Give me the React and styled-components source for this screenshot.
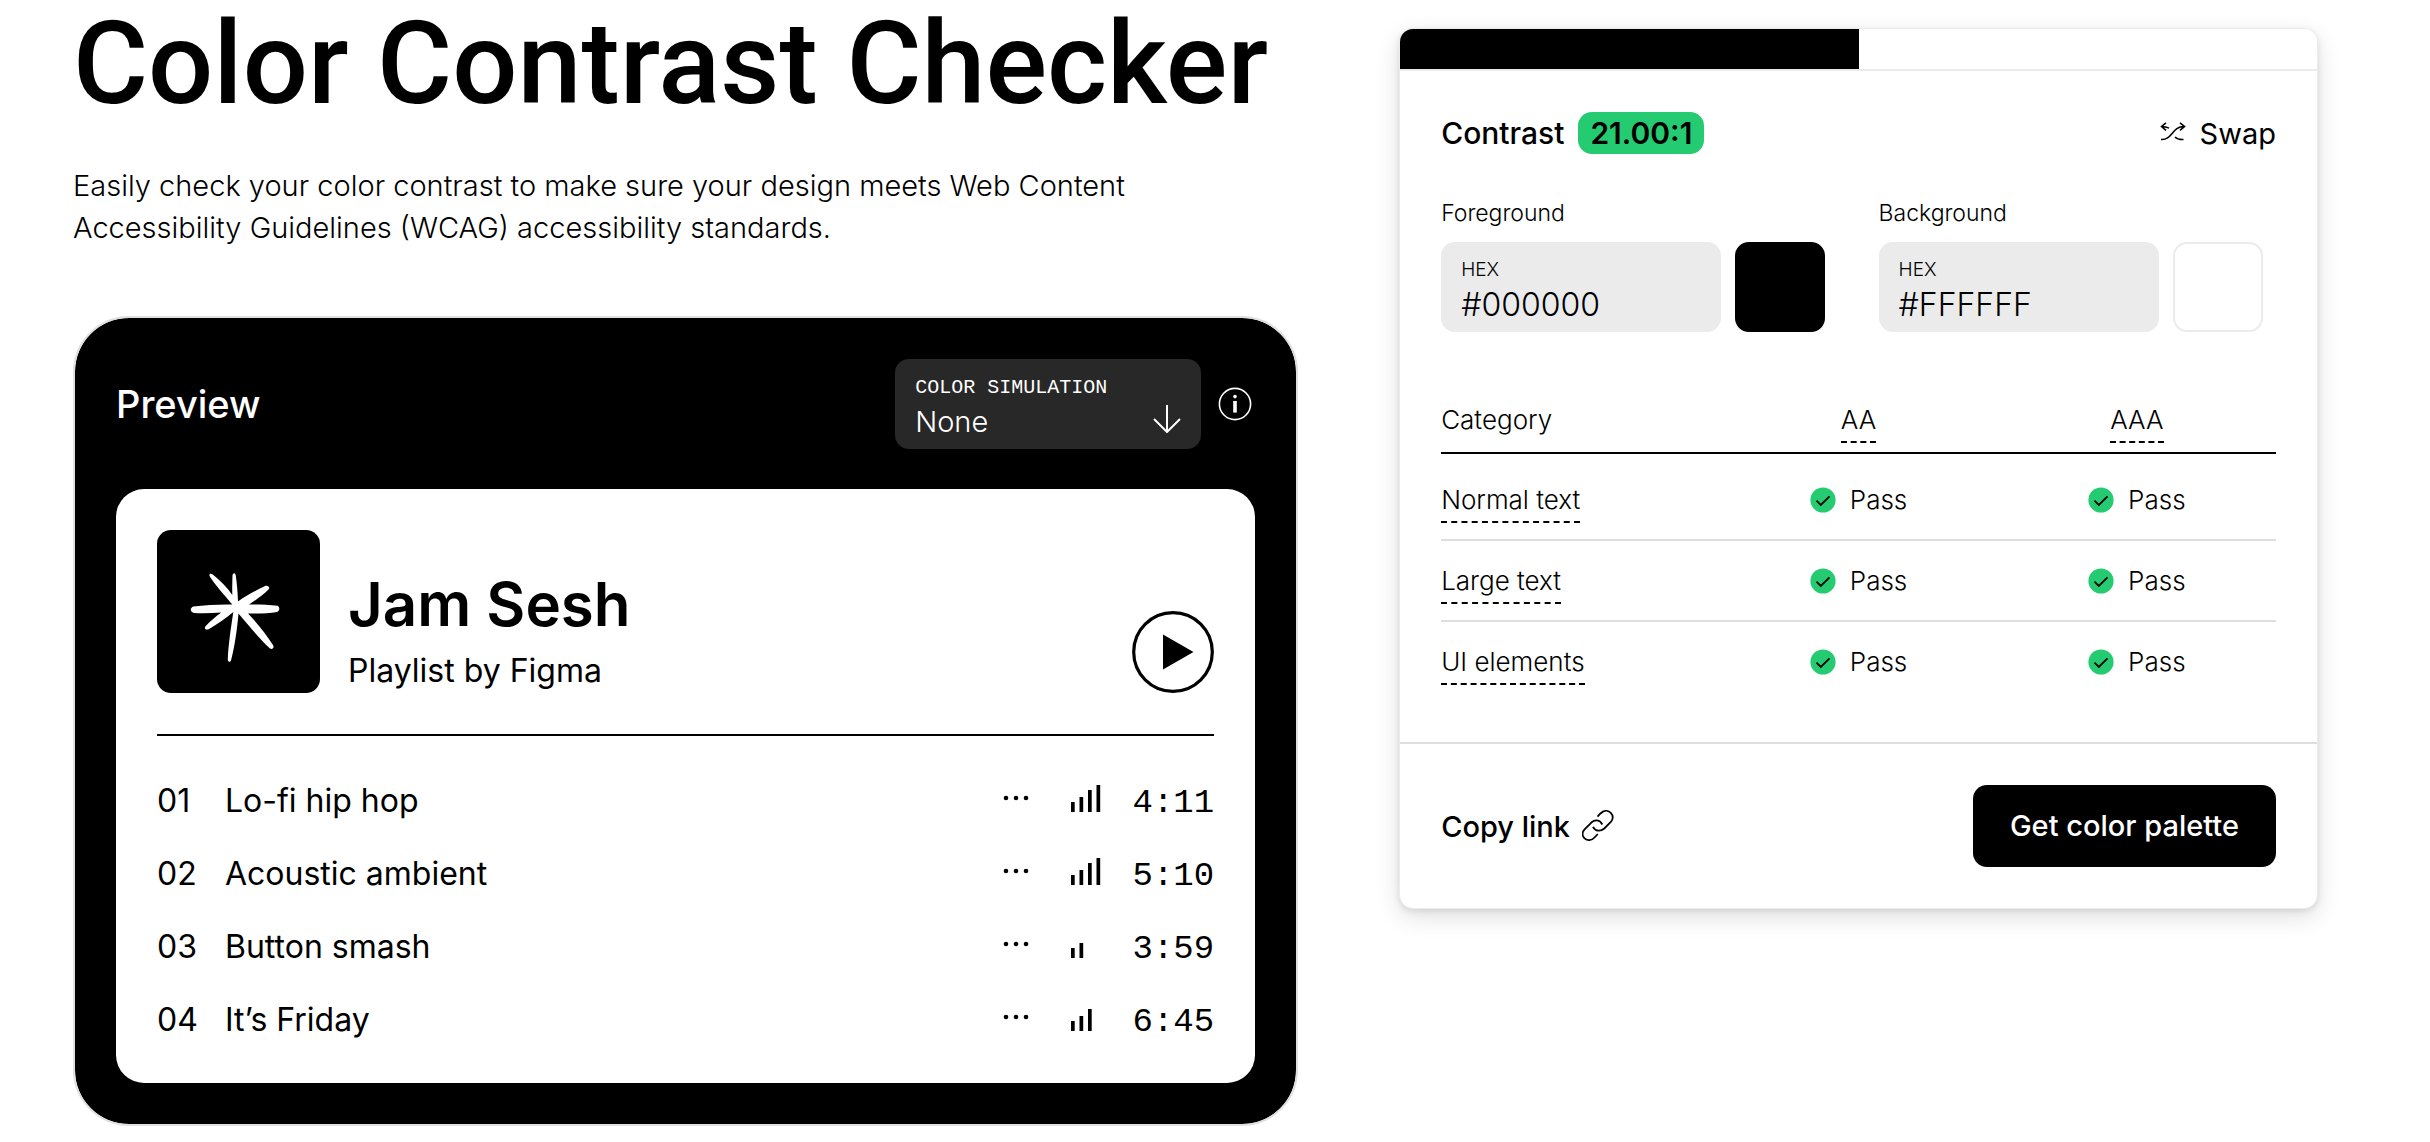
import styled, { createGlobalStyle } from "styled-components";

const tracks = [
    { number: '01', title: 'Lo-fi hip hop', bars: 4, time: '4:11' },
    { number: '02', title: 'Acoustic ambient', bars: 4, time: '5:10' },
    { number: '03', title: 'Button smash', bars: 2, time: '3:59' },
    { number: '04', title: 'It’s Friday', bars: 3, time: '6:45' },
]

const categories = ['Normal text', 'Large text', 'UI elements']

const barHeights = [10, 15, 22, 27]

function ColorField({ label, id, value }) {
    return (
        <SField>
            <SFieldLabel htmlFor={id}>{label}</SFieldLabel>
            <SFieldRow>
                <SHexBox>
                    <SHexCaption>HEX</SHexCaption>
                    <SHexInput id={id} type="text" defaultValue={value} />
                </SHexBox>
                <SSwatch type="button" aria-label={`${label} color`} $color={value} />
            </SFieldRow>
        </SField>
    )
}

function Pass() {
    return (
        <SPass>
            <svg width="26" height="26" viewBox="0 0 26 26" aria-hidden="true">
                <circle cx="13" cy="13" r="12.6" fill="#24cb71" />
                <path d="M6.5 13.700l4.300 4.300L19.500 9.300" fill="none" stroke="#000" strokeWidth="1.800" />
            </svg>
            Pass
        </SPass>
    )
}

export default function App() {
    return (
        <>
            <GlobalStyle />
            <SMain>
                <SIntro>
                    <STitle>Color Contrast Checker</STitle>
                    <SText>
                        Easily check your color contrast to make sure your design meets Web Content Accessibility Guidelines (WCAG) accessibility standards.
                    </SText>

                    <SPreview>
                        <SPreviewHeader>
                            <h2>Preview</h2>
                            <SSimulation>
                                <label htmlFor="simulation">COLOR SIMULATION</label>
                                <select id="simulation" defaultValue="None">
                                    <option>None</option>
                                    <option>Protanopia</option>
                                    <option>Deuteranopia</option>
                                    <option>Tritanopia</option>
                                </select>
                                <SArrow width="28" height="28" viewBox="0 0 28 28" aria-hidden="true">
                                    <path d="M14 0v27M1 14l13 13 13-13" />
                                </SArrow>
                            </SSimulation>
                            <SIconButton type="button" aria-label="About color simulation">
                                <svg width="40" height="40" viewBox="0 0 40 40" aria-hidden="true">
                                    <circle cx="20" cy="20" r="15.6" fill="none" stroke="#fff" strokeWidth="1.6" />
                                    <circle cx="20" cy="12.6" r="1.800" fill="#fff" />
                                    <path d="M18.200 17h3.600v11.6h-3.6z" fill="#fff" />
                                </svg>
                            </SIconButton>
                        </SPreviewHeader>

                        <SPlaylist>
                            <SPlaylistHeader>
                                <SCover>
                                    <svg width="163" height="163" viewBox="0 0 163 163" aria-hidden="true">
                                        <path
                                            fill="#fff"
                                            d="M75.5 45c1-2.500 2.500-2.500 3.200 0 1.200 8 2 17 2.300 26.500 8-6 20-12 27-15.500 3-.8 5.500 1.500 3.500 3.500-6 6-14 11.500-19.500 15 10-.3 19 .3 28.500 1.200 2.500 1.500 2.500 5-.5 6.300-8 1.400-18 1.800-29 1.500 9 9 18.500 21.500 25 31.500 1.500 2.500-.5 5-3 3.500-11-10-22-24-31.500-35-1.500 17-4 33.500-7.500 47-.8 2-3.400 1.500-3.200-1 .5-14 3-31 5.500-47.500-7.500 6.500-16.500 12.500-25 17.500-3 .5-4.500-1-2.500-3.500 4.500-5 10-9.500 15.500-13.500-10 .8-19 .8-27.500.5-4-1.500-4-5-.5-6.500 12-1.500 27-2.300 39-2-8-9.500-17-19.500-22.500-28-.8-2.500 0-3.500 3-2 7.500 6 14.500 13 19.500 20.500-.2-7 0-13 .2-20z"
                                        />
                                    </svg>
                                </SCover>
                                <SPlaylistName>
                                    <h3>Jam Sesh</h3>
                                    <p>Playlist by Figma</p>
                                </SPlaylistName>
                                <SIconButton type="button" aria-label="Play">
                                    <svg width="82" height="82" viewBox="0 0 82 82" aria-hidden="true">
                                        <circle cx="41" cy="41" r="39.300" fill="none" stroke="#000" strokeWidth="3.2" />
                                        <path d="M31 23.500v35L61.500 41z" />
                                    </svg>
                                </SIconButton>
                            </SPlaylistHeader>

                            <STracks>
                                {tracks.map((track) => (
                                    <STrack key={track.number}>
                                        <STrackNumber>{track.number}</STrackNumber>
                                        <STrackTitle>{track.title}</STrackTitle>
                                        <SIconButton type="button" aria-label={`More about ${track.title}`}>
                                            <svg width="38" height="28" viewBox="0 0 38 28" aria-hidden="true">
                                                <circle cx="3" cy="14" r="2.3" />
                                                <circle cx="13" cy="14" r="2.3" />
                                                <circle cx="23" cy="14" r="2.3" />
                                            </svg>
                                        </SIconButton>
                                        <svg width="32" height="28" viewBox="0 0 32 28" aria-hidden="true">
                                            {barHeights.slice(0, track.bars).map((height, i) => (
                                                <rect key={height} x={i * 8.5} y={28 - height} width="3.7" height={height} />
                                            ))}
                                        </svg>
                                        <STime>{track.time}</STime>
                                    </STrack>
                                ))}
                            </STracks>
                        </SPlaylist>
                    </SPreview>
                </SIntro>

                <SChecker>
                    <SBar>
                        <SBarHalf $color="#000" />
                        <SBarHalf $color="#fff" />
                    </SBar>

                    <SCheckerBody>
                        <SCheckerHeader>
                            <h2>Contrast</h2>
                            <SBadge>21.00:1</SBadge>
                            <SSwap type="button">
                                <svg width="26" height="22" viewBox="0 0 26 22" aria-hidden="true">
                                    <path d="M1 17.500c11 1 11-13 23-13M20 .8l4.500 3.700-4.500 3.800M6 .8L1.500 4.500 6 8.300M1.500 4.500c3 0 5.500.5 7.500 1.600M15 15c2 2 5 2.800 8.500 2.500" />
                                </svg>
                                Swap
                            </SSwap>
                        </SCheckerHeader>

                        <SFields>
                            <ColorField label="Foreground" id="foreground" value="#000000" />
                            <ColorField label="Background" id="background" value="#FFFFFF" />
                        </SFields>

                        <STable>
                            <thead>
                                <tr>
                                    <th scope="col">Category</th>
                                    <th scope="col"><SHint>AA</SHint></th>
                                    <th scope="col"><SHint>AAA</SHint></th>
                                </tr>
                            </thead>
                            <tbody>
                                {categories.map((category) => (
                                    <tr key={category}>
                                        <th scope="row"><SHint>{category}</SHint></th>
                                        <td><Pass /></td>
                                        <td><Pass /></td>
                                    </tr>
                                ))}
                            </tbody>
                        </STable>
                    </SCheckerBody>

                    <SCheckerFooter>
                        <SCopy type="button">
                            Copy link
                            <svg width="32" height="32" viewBox="0 0 32 32" aria-hidden="true">
                                <path d="M15.500 6.700l3-3.200c3.500-3.500 7.500-3.300 10.300-.7 2.600 2.600 2.600 6.600-.2 9.400l-6.300 6.300c-3.800 3.300-8.800 3-11.300-1.700" />
                                <path d="M20.300 14.500c-2.500-5-7.500-5-10.700-2.200l-7 7c-2.600 2.800-2.600 6.400 0 9 2.800 2.600 6.900 2.500 9.900-.8l3.300-3.500" />
                            </svg>
                        </SCopy>
                        <SPalette href="#palette">Get color palette</SPalette>
                    </SCheckerFooter>
                </SChecker>
            </SMain>
        </>
    )
}

// ==================================== STYLES ===============================

const GlobalStyle = createGlobalStyle`
    * {
        box-sizing: border-box;
        margin: 0;
        padding: 0;
    }

    body {
        background: #fff;
        color: #000;
        font-family: Inter, "Liberation Sans", sans-serif;
        font-size: 29px;
        font-weight: 300;
    }

    h1, h2, h3 {
        font-weight: 500;
    }

    button, input, select {
        border: none;
        background: none;
        color: inherit;
        font: inherit;
    }

    svg {
        display: block;
        flex: none;
    }
`

const SMain = styled.main`
    display: grid;
    grid-template-columns: 4fr 3fr;
    align-items: start;
    gap: 101px;
    padding: 0 112px 16px 73px;
`

const SIntro = styled.section`
    min-width: 0;
`

const STitle = styled.h1`
    font-family: Roboto, "Liberation Sans", sans-serif;
    font-size: 115px;
    line-height: 128px;
    white-space: nowrap;
`

const SText = styled.p`
    max-width: 1100px;
    padding: 37px 0 67px;
    line-height: 42px;
`

// ============================== PREVIEW ============================== \\

const SPreview = styled.div`
    padding: 41px;
    border: 2px solid #e0e0e0;
    border-radius: 56px;
    background: #000 padding-box;
`

const SPreviewHeader = styled.div`
    display: flex;
    align-items: center;
    gap: 14px;
    padding-bottom: 40px;
    color: #fff;

    h2 {
        flex: 1;
        font-size: 38px;
    }
`

const SSimulation = styled.div`
    position: relative;
    display: flex;
    flex-direction: column;
    width: 306px;
    height: 90px;
    padding: 16px 20px 6px;
    border-radius: 14px;
    background: #282828;

    label {
        font-family: "Liberation Mono", monospace;
        font-size: 20px;
        line-height: 26px;
    }

    select {
        appearance: none;
        line-height: 42px;
    }
`

// sits over the native select
const SArrow = styled.svg`
    position: absolute;
    right: 20px;
    bottom: 16px;
    fill: none;
    stroke: #fff;
    stroke-width: 2;
    pointer-events: none;
`

const SIconButton = styled.button`
    cursor: pointer;
`

const SPlaylist = styled.div`
    padding: 41px;
    border-radius: 28px;
    background: #fff;
    color: #000;
`

const SPlaylistHeader = styled.div`
    display: flex;
    align-items: flex-end;
    gap: 28px;
    padding-bottom: 41px;
    border-bottom: 2px solid #000;
`

const SCover = styled.div`
    border-radius: 14px;
    background: #000;
`

const SPlaylistName = styled.div`
    display: grid;
    flex: 1;
    gap: 6px;

    h3 {
        font-size: 60px;
        font-weight: 600;
        line-height: 78px;
    }

    p {
        font-size: 32px;
        font-weight: 400;
        line-height: 44px;
    }
`

const STracks = styled.ol`
    display: grid;
    gap: 28px;
    padding-top: 42px;
    list-style: none;
    font-size: 32px;
    font-weight: 400;
    line-height: 45px;
`

const STrack = styled.li`
    display: flex;
    align-items: baseline;
    gap: 30px;
`

const STrackNumber = styled.span`
    width: 38px;
`

const STrackTitle = styled.span`
    flex: 1;
`

const STime = styled.span`
    font-family: "Liberation Mono", monospace;
    font-size: 34px;
    line-height: 40px;
`

// ============================== CHECKER ============================== \\

const SChecker = styled.section`
    overflow: hidden;
    margin-top: 28px;
    border: 1px solid #ebebeb;
    border-radius: 14px;
    background: #fff;
    box-shadow: 0 8px 24px rgba(0, 0, 0, 0.12), 0 2px 6px rgba(0, 0, 0, 0.1);
`

const SBar = styled.div`
    display: flex;
    height: 42px;
    border-bottom: 2px solid #ebebeb;
`

const SBarHalf = styled.div`
    flex: 1;
    background: ${(props) => props.$color};
`

const SCheckerBody = styled.div`
    padding: 41px;
`

const SCheckerHeader = styled.div`
    display: flex;
    align-items: center;
    gap: 14px;

    h2 {
        font-size: 30px;
    }
`

const SBadge = styled.strong`
    padding: 0 12px;
    border-radius: 14px;
    background: #24cb71;
    font-size: 30px;
    font-weight: 600;
    line-height: 42px;
`

const SSwap = styled.button`
    display: flex;
    align-items: center;
    gap: 14px;
    margin-left: auto;
    font-weight: 400;
    cursor: pointer;

    path {
        fill: none;
        stroke: #000;
        stroke-width: 1.6;
    }
`

const SFields = styled.div`
    display: grid;
    grid-template-columns: 1fr 1fr;
    gap: 40px;
    padding: 44px 0 70px;
`

const SField = styled.div`
    display: grid;
    gap: 14px;
`

const SFieldLabel = styled.label`
    font-size: 23px;
    line-height: 30px;
`

const SFieldRow = styled.div`
    display: flex;
    gap: 14px;
`

const SHexBox = styled.div`
    width: 280px;
    height: 90px;
    padding: 16px 20px 6px;
    border-radius: 14px;
    background: #ebebeb;
`

const SHexCaption = styled.div`
    font-size: 19px;
    line-height: 24px;
`

const SHexInput = styled.input`
    display: block;
    width: 100%;
    height: 44px;
    font-size: 32px;
`

const SSwatch = styled.button`
    width: 90px;
    height: 90px;
    border: 2px solid ${(props) => (props.$color === '#FFFFFF' ? '#ebebeb' : props.$color)};
    border-radius: 14px;
    background: ${(props) => props.$color};
    cursor: pointer;
`

const STable = styled.table`
    width: 100%;
    border-collapse: collapse;
    table-layout: fixed;
    font-size: 26px;
    line-height: 36px;

    th {
        font-weight: inherit;
    }

    th:first-child {
        text-align: left;
    }

    thead th {
        padding-bottom: 9px;
        border-bottom: 2px solid #000;
        vertical-align: top;
    }

    tbody th,
    tbody td {
        padding: 22px 0 16px;
        vertical-align: top;
    }

    tbody tr:first-child > * {
        padding-top: 28px;
    }

    tbody tr + tr {
        border-top: 2px solid #dedede;
    }
`

const SHint = styled.span`
    display: inline-block;
    padding-bottom: 3px;
    border-bottom: 2px dashed #000;
`

const SPass = styled.span`
    display: flex;
    align-items: center;
    justify-content: center;
    gap: 14px;
`

const SCheckerFooter = styled.div`
    display: flex;
    align-items: center;
    justify-content: space-between;
    padding: 41px;
    border-top: 2px solid #dedede;
`

const SCopy = styled.button`
    display: flex;
    align-items: center;
    gap: 12px;
    font-weight: 500;
    cursor: pointer;

    path {
        fill: none;
        stroke: #000;
        stroke-width: 1.8;
    }
`

const SPalette = styled.a`
    padding: 0 37px;
    border-radius: 14px;
    background: #000;
    color: #fff;
    font-weight: 500;
    line-height: 82px;
    text-decoration: none;
`
